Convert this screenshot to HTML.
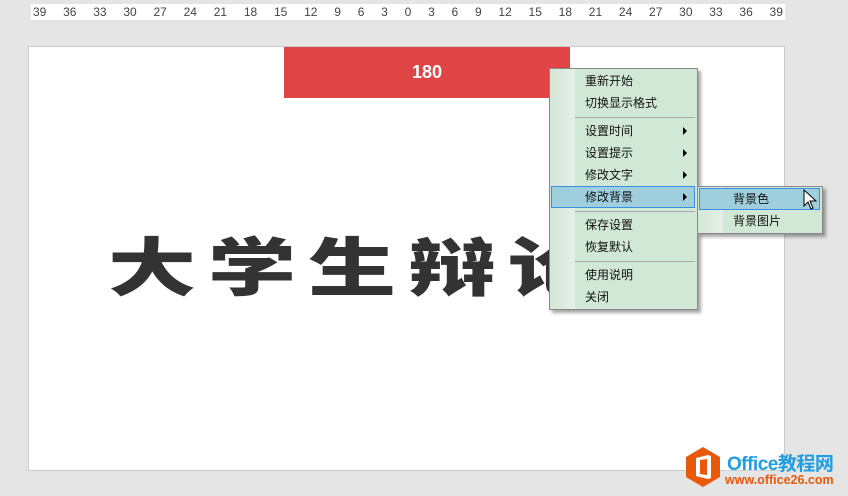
<html><head><style>
body{margin:0;width:848px;height:496px;background:#e5e5e5;position:relative;overflow:hidden;font-family:"Liberation Sans","Noto Sans CJK SC",sans-serif}
.a{position:absolute}
.ruler{left:31px;top:4px;width:754px;height:16px;background:#fff;display:flex;justify-content:space-between;font-size:12px;color:#444;line-height:16px;padding:0 2px;box-sizing:border-box}
.canvas{left:28px;top:46px;width:757px;height:425px;background:#fff;border:1px solid #ccc;box-sizing:border-box}
.red{left:284px;top:47px;width:286px;height:51px;background:#e04546;color:#fff;font-weight:bold;font-size:18px;text-align:center;line-height:51px}
.big{left:108px;top:232px;font-size:88px;line-height:88px;font-weight:900;color:#333;letter-spacing:12px;transform:scaleY(0.72);transform-origin:top left;font-family:"Noto Sans CJK SC",sans-serif;white-space:nowrap}
.menu{background:#d2e8d6;border:1px solid #888;box-shadow:3px 3px 3px rgba(0,0,0,.35);font-size:12px;color:#111}
.gut{position:absolute;left:0;top:0;bottom:0;width:25px;background:linear-gradient(90deg,#d2e8d6,#e6eee8)}
.it{position:absolute;left:35px;height:22px;line-height:22px}
.sep{position:absolute;left:25px;right:2px;height:1px;background:#aaa}
.arr{position:absolute;left:133px;width:0;height:0;border-left:4px solid #000;border-top:4px solid transparent;border-bottom:4px solid transparent}
.hl{position:absolute;background:#9fcfdc;border:1px solid #3a8ee6;box-sizing:border-box}
</style></head><body>
<div class="a ruler"><span>39</span><span>36</span><span>33</span><span>30</span><span>27</span><span>24</span><span>21</span><span>18</span><span>15</span><span>12</span><span>9</span><span>6</span><span>3</span><span>0</span><span>3</span><span>6</span><span>9</span><span>12</span><span>15</span><span>18</span><span>21</span><span>24</span><span>27</span><span>30</span><span>33</span><span>36</span><span>39</span></div>
<div class="a canvas"></div>
<div class="a red">180</div>
<div class="a big">大学生辩论赛</div>
<div class="a menu" style="left:549px;top:68px;width:147px;height:240px">
<div class="gut"></div>
<div class="hl" style="left:1px;top:117px;width:144px;height:22px"></div>
<div class="it" style="top:1px">重新开始</div>
<div class="it" style="top:23px">切换显示格式</div>
<div class="sep" style="top:48px"></div>
<div class="it" style="top:51px">设置时间</div><div class="arr" style="top:58px"></div>
<div class="it" style="top:73px">设置提示</div><div class="arr" style="top:80px"></div>
<div class="it" style="top:95px">修改文字</div><div class="arr" style="top:102px"></div>
<div class="it" style="top:117px">修改背景</div><div class="arr" style="top:124px"></div>
<div class="sep" style="top:142px"></div>
<div class="it" style="top:145px">保存设置</div>
<div class="it" style="top:167px">恢复默认</div>
<div class="sep" style="top:192px"></div>
<div class="it" style="top:195px">使用说明</div>
<div class="it" style="top:217px">关闭</div>
</div>
<div class="a menu" style="left:697px;top:186px;width:124px;height:46px">
<div class="gut"></div>
<div class="hl" style="left:1px;top:1px;width:121px;height:22px"></div>
<div class="it" style="top:1px">背景色</div>
<div class="it" style="top:23px">背景图片</div>
</div>
<svg class="a" style="left:803px;top:189px" width="16" height="22" viewBox="0 0 16 22"><path d="M1 1 L1 17 L5 13 L8 20 L10 19 L7 12 L13 12 Z" fill="#fff" stroke="#000" stroke-width="1"/></svg>
<svg class="a" style="left:684px;top:446px" width="38" height="42" viewBox="0 0 38 42"><path d="M19 1 L36 11 L36 31 L19 41 L2 31 L2 11 Z" fill="#e8590c"/><path d="M12 12 L24 9 L27 10 L27 32 L24 33 L12 30 Z" fill="#fff"/><path d="M16 14 L23 13 L23 29 L16 28 Z" fill="#e8590c"/></svg>
<div class="a" style="left:727px;top:449px;font-size:19px;font-weight:bold;color:#1e9ee0;white-space:nowrap;letter-spacing:-0.5px">Office教程网</div>
<div class="a" style="left:725px;top:473px;font-size:12.5px;font-weight:bold;color:#e8590c;white-space:nowrap">www.office26.com</div>
</body></html>
